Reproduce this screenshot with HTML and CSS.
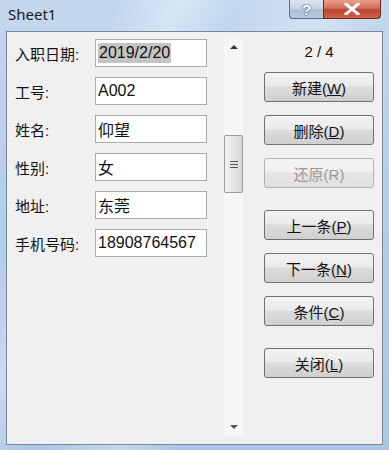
FILE: index.html
```html
<!DOCTYPE html>
<html lang="zh-CN">

<head>
    <meta charset="UTF-8">
    <title>Sheet1</title>
    <link rel="stylesheet" href="styles.css">
</head>

<body>
    <div class="window">
        <div class="titlebar">
            <span class="title">Sheet1</span>
            <div class="caption">
                <div class="cap-btn help">?</div>
                <div class="cap-btn close">
                    <svg width="18" height="12" viewBox="0 0 18 12">
                        <path d="M3 1 L15 11 M15 1 L3 11" stroke="#fff" stroke-width="3" stroke-linecap="square"/>
                    </svg>
                </div>
            </div>
        </div>

        <div class="client">
            <div class="form">
                <div class="row"><label>入职日期:</label><div class="field"><span class="sel">2019/2/20</span></div></div>
                <div class="row"><label>工号:</label><div class="field">A002</div></div>
                <div class="row"><label>姓名:</label><div class="field">仰望</div></div>
                <div class="row"><label>性别:</label><div class="field">女</div></div>
                <div class="row"><label>地址:</label><div class="field">东莞</div></div>
                <div class="row"><label>手机号码:</label><div class="field">18908764567</div></div>
            </div>

            <div class="scrollbar">
                <div class="arrow up"></div>
                <div class="track">
                    <div class="thumb"><span></span><span></span><span></span></div>
                </div>
                <div class="arrow down"></div>
            </div>

            <div class="actions">
                <div class="counter">2 / 4</div>
                <button class="btn">新建(<u>W</u>)</button>
                <button class="btn">删除(<u>D</u>)</button>
                <button class="btn disabled">还原(R)</button>
                <button class="btn gap">上一条(<u>P</u>)</button>
                <button class="btn">下一条(<u>N</u>)</button>
                <button class="btn">条件(<u>C</u>)</button>
                <button class="btn gap">关闭(<u>L</u>)</button>
            </div>
        </div>
    </div>
</body>

</html>
```

FILE: styles.css
```css
html,
body {
    margin: 0;
    padding: 0;
    width: 389px;
    height: 450px;
    overflow: hidden;
    font-family: "Liberation Sans", "Noto Sans CJK SC", sans-serif;
}

.window {
    width: 389px;
    height: 450px;
    box-sizing: border-box;
    padding: 0 6px 5px 6px;
    display: flex;
    flex-direction: column;
    background:
        linear-gradient(115deg, rgba(255, 255, 255, 0) 20%, rgba(255, 255, 255, 0.35) 30%, rgba(255, 255, 255, 0) 40%, rgba(255, 255, 255, 0.3) 55%, rgba(255, 255, 255, 0) 65%),
        linear-gradient(180deg, #c3d8ee 0%, #b6cfe9 40%, #a9c6e6 100%);
}

.titlebar {
    height: 31px;
    display: flex;
    justify-content: space-between;
    align-items: flex-start;
}

.title {
    font-family: "Noto Sans", sans-serif;
    font-size: 15px;
    color: #1a1a1a;
    margin: 4px 0 0 2px;
}

.caption {
    display: flex;
    margin-right: 2px;
}

.cap-btn {
    height: 19px;
    border: 1px solid #5a6d86;
    border-top: none;
    display: flex;
    align-items: center;
    justify-content: center;
    box-sizing: border-box;
}

.help {
    width: 34px;
    border-radius: 0 0 0 4px;
    border-right: none;
    background: linear-gradient(180deg, #dbe5f1 0%, #c4d3e5 50%, #adbfd6 55%, #b8cade 100%);
    color: #fff;
    font-weight: bold;
    font-size: 15px;
    text-shadow: 0 0 2px #3b4d66, 0 0 1px #3b4d66;
}

.close {
    width: 58px;
    border-radius: 0 0 4px 0;
    border-color: #6e2a22;
    background: linear-gradient(180deg, #e7a08f 0%, #d46f5c 45%, #c1432d 55%, #d0634a 100%);
}

.client {
    flex: 1;
    background: #f0f0f0;
    border: 1px solid #7a8797;
    display: flex;
    padding: 7px 0 0 8px;
}

.form {
    width: 200px;
    display: flex;
    flex-direction: column;
    gap: 10px;
}

.row {
    display: flex;
    align-items: center;
    height: 28px;
}

.row label {
    width: 80px;
    font-size: 15px;
    color: #111;
}

.field {
    width: 112px;
    height: 28px;
    box-sizing: border-box;
    background: #fff;
    border: 1px solid #ababab;
    font-size: 16px;
    color: #111;
    padding: 0 0 0 2px;
    display: flex;
    align-items: center;
}

.sel {
    background: #c4c4c4;
    padding: 1px 1px;
}

.scrollbar {
    width: 19px;
    margin: 0 0 9px 9px;
    background: #f6f6f6;
    display: flex;
    flex-direction: column;
    align-items: center;
}

.arrow {
    height: 16px;
    width: 19px;
    display: flex;
    align-items: center;
    justify-content: center;
}

.arrow::before {
    content: "";
    border-left: 4px solid transparent;
    border-right: 4px solid transparent;
}

.up::before {
    border-bottom: 4px solid #333;
}

.down::before {
    border-top: 4px solid #555;
}

.track {
    flex: 1;
    width: 100%;
    padding-top: 80px;
}

.thumb {
    height: 58px;
    box-sizing: border-box;
    border: 1px solid #9a9a9a;
    border-radius: 2px;
    background: linear-gradient(90deg, #f4f4f4 0%, #e4e4e4 50%, #d6d6d6 100%);
    display: flex;
    flex-direction: column;
    justify-content: center;
    align-items: center;
    gap: 2px;
}

.thumb span {
    width: 8px;
    height: 1px;
    background: #555;
}

.actions {
    width: 110px;
    margin-left: 21px;
    display: flex;
    flex-direction: column;
    align-items: stretch;
}

.counter {
    text-align: center;
    font-size: 15px;
    color: #111;
    height: 27px;
    margin-top: 4px;
    margin-bottom: 2px;
}

.btn {
    height: 30px;
    margin-bottom: 13px;
    border: 1px solid #707070;
    border-radius: 3px;
    background: linear-gradient(180deg, #f2f2f2 0%, #ebebeb 45%, #dddddd 50%, #cfcfcf 100%);
    font-family: "Liberation Sans", "Noto Sans CJK SC", sans-serif;
    font-size: 15px;
    color: #111;
    padding: 0;
}

.btn.disabled {
    color: #9a9a9a;
    border-color: #adb2b5;
    background: linear-gradient(180deg, #f4f4f4 0%, #efefef 45%, #e6e6e6 50%, #e0e0e0 100%);
}

.btn.gap {
    margin-top: 9px;
}
```
